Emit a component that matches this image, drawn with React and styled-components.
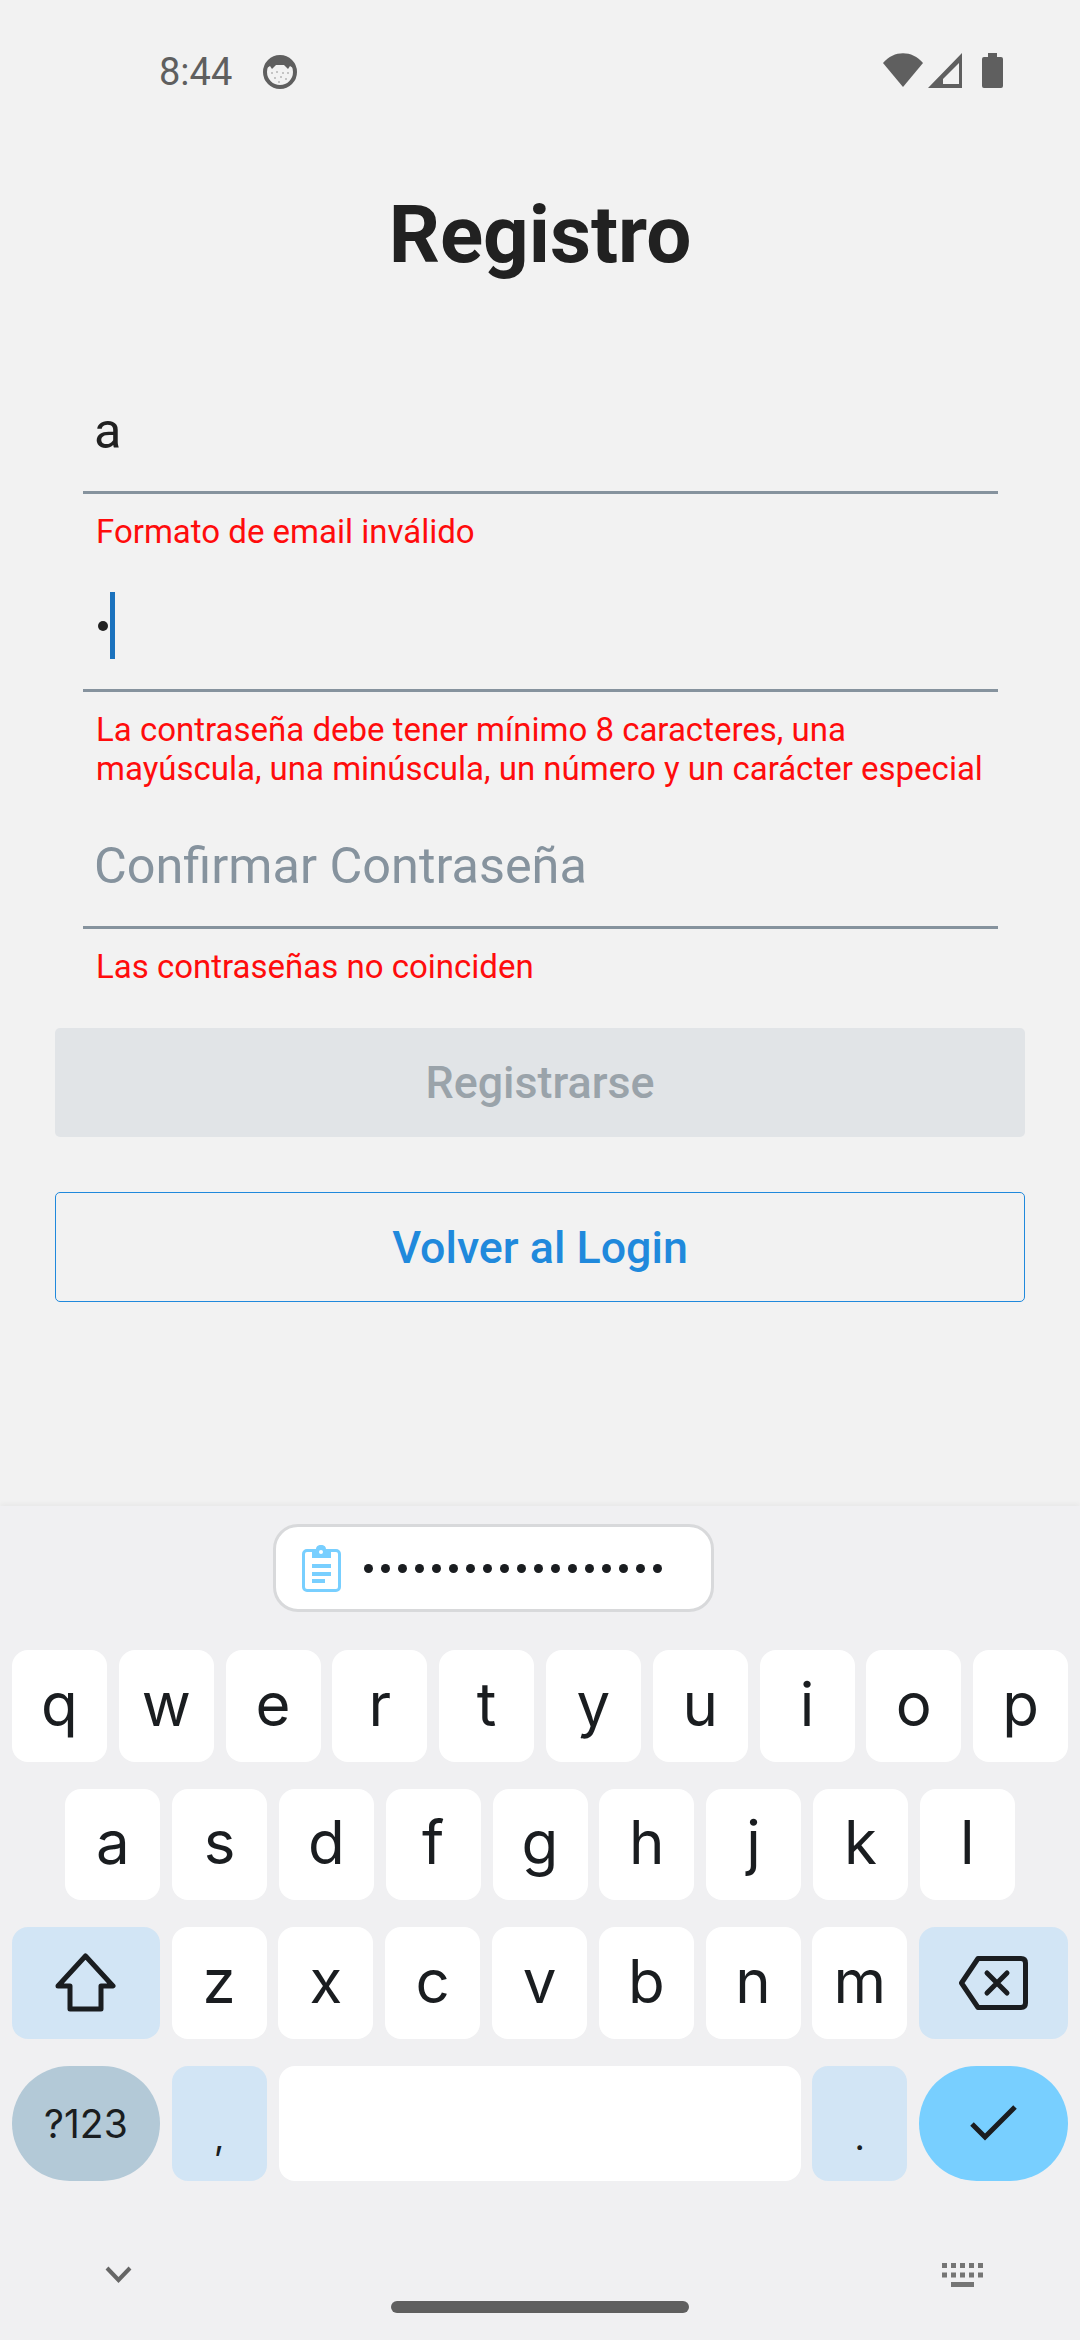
import React from 'react';
import styled, { createGlobalStyle } from 'styled-components';

const GlobalStyle = createGlobalStyle`
  html, body {
    margin: 0;
    padding: 0;
    background: #f2f2f2;
  }
  * {
    box-sizing: border-box;
  }
`;

const Screen = styled.div`
  width: 1080px;
  height: 2340px;
  display: flex;
  flex-direction: column;
  overflow: hidden;
  background: #f2f2f2;
  font-family: Roboto, "Liberation Sans", sans-serif;
`;

const StatusBar = styled.div`
  height: 142px;
  flex: none;
  display: flex;
  justify-content: space-between;
  align-items: flex-start;
  padding: 52px 77px 0 159px;
  color: #5f5f5f;
`;

const StatusLeft = styled.div`
  display: flex;
  align-items: center;
  gap: 31px;
  font-size: 38px;
  line-height: 40px;
`;

const StatusRight = styled.div`
  display: flex;
  align-items: flex-start;
  gap: 5px;
  height: 40px;
  padding-top: 1px;
`;

const BatterySvg = styled.svg`
  margin-left: 15px;
`;

const Title = styled.h1`
  margin: 47px 0 88px;
  font-size: 80px;
  line-height: 92px;
  font-weight: 700;
  text-align: center;
  color: #212121;
`;

const Form = styled.div`
  padding: 0 55px;
  display: flex;
  flex-direction: column;
`;

const Field = styled.div`
  margin: 0 27px 0 28px;
  height: 125px;
  flex: none;
  display: flex;
  align-items: center;
  padding-left: 11px;
  font-size: 50.4px;
  color: ${(p) => (p.$placeholder ? '#86939e' : '#212121')};
  border-bottom: 3px solid #86939e;
`;

const ErrorText = styled.div`
  margin: 18px 27px ${(p) => p.$bottom}px 41px;
  font-size: 33px;
  line-height: 39px;
  color: #ff0c0c;
`;

const Caret = styled.span`
  width: 5px;
  height: 67px;
  background: #1b72bd;
  margin: 0 0 5px 2px;
`;

const Dot = styled.span`
  width: 10px;
  height: 10px;
  border-radius: 50%;
  background: #212121;
  margin: 0 0 4px 4px;
`;

const SolidButton = styled.div`
  height: 109px;
  border-radius: 5px;
  background: #e1e4e7;
  color: #9aa3aa;
  font-size: 44.8px;
  font-weight: 500;
  display: flex;
  align-items: center;
  justify-content: center;
`;

const OutlineButton = styled(SolidButton)`
  margin-top: 55px;
  height: 110px;
  background: transparent;
  border: 1px solid #2089dc;
  color: #2089dc;
`;

const Keyboard = styled.div`
  margin-top: auto;
  height: 834px;
  flex: none;
  background: #f0f0f2;
  box-shadow: 0 -3px 5px rgba(0, 0, 0, 0.04);
  display: flex;
  flex-direction: column;
  font-family: Inter, Roboto, sans-serif;
`;

const SuggestionRow = styled.div`
  height: 144px;
  flex: none;
  display: flex;
  padding: 18px 0 0 273px;
`;

const ClipChip = styled.div`
  width: 441px;
  height: 88px;
  border-radius: 25px;
  background: #fff;
  border: 3px solid #d8d9db;
  display: flex;
  align-items: center;
  gap: 23px;
  padding-left: 26px;
`;

const ClipDots = styled.div`
  display: flex;
  gap: 8px;
`;

const ClipDot = styled.span`
  width: 9px;
  height: 9px;
  border-radius: 50%;
  background: #1a1d20;
`;

const KeyRows = styled.div`
  display: flex;
  flex-direction: column;
  gap: 27px;
  padding: 0 12px;
`;

const KeyRow = styled.div`
  display: flex;
  justify-content: center;
  gap: 11.8px;
  height: ${(p) => p.$height || 111.5}px;
`;

const Key = styled.div`
  width: ${(p) => p.$width || 95}px;
  flex: none;
  display: flex;
  align-items: ${(p) => (p.$low ? 'flex-end' : 'center')};
  justify-content: center;
  border-radius: ${(p) => p.$radius || 16}px;
  background: ${(p) => p.$bg || '#fff'};
  color: #1a1d20;
  font-size: ${(p) => p.$size || 60}px;
  line-height: 1;
  padding-bottom: ${(p) => (p.$low ? 26 : p.$flat ? 0 : 4)}px;
`;

const NavBar = styled.div`
  flex: 1;
  position: relative;
  display: flex;
  justify-content: space-between;
  align-items: flex-start;
  padding: 82px 97px 0 105px;
`;

const ChevronSvg = styled.svg`
  margin-top: 3px;
`;

const HomePill = styled.div`
  position: absolute;
  left: 391px;
  bottom: 27px;
  width: 298px;
  height: 12px;
  border-radius: 6px;
  background: #5f5f5f;
`;

const FaceIcon = () => (
  <svg width="34" height="34" viewBox="0 0 34 34">
    <circle cx="17" cy="17" r="15" fill="#f2f2f2" stroke="#5f5f5f" strokeWidth="4" />
    <path d="M4 13 C6 6 11 3 17 3 C23 3 28 6 30 13 L27 11 L25 14 L21 10 H13 L9 14 L7 11 Z" fill="#5f5f5f" />
    <g fill="#8a8a8a">
      <circle cx="9" cy="18" r="0.8" />
      <circle cx="14" cy="17" r="0.8" />
      <circle cx="20" cy="18" r="0.8" />
      <circle cx="25" cy="18" r="0.8" />
      <circle cx="12" cy="23" r="0.8" />
      <circle cx="18" cy="22" r="0.8" />
      <circle cx="23" cy="24" r="0.8" />
      <circle cx="16" cy="27" r="0.8" />
    </g>
  </svg>
);

const WifiIcon = () => (
  <svg width="40" height="35" viewBox="0 0 40 35">
    <path d="M0 10 C11 -3 29 -3 40 10 L20 34 Z" fill="#5f5f5f" />
  </svg>
);

const SignalIcon = () => (
  <svg width="34" height="35" viewBox="0 0 34 35">
    <path d="M0 35 L34 0 V35 Z M15 31 H31 V10 L15 26 Z" fill="#5f5f5f" fillRule="evenodd" />
  </svg>
);

const BatteryIcon = () => (
  <BatterySvg width="21" height="35" viewBox="0 0 21 35">
    <path d="M6 0 H15 V4 H19 Q21 4 21 6 V33 Q21 35 19 35 H2 Q0 35 0 33 V6 Q0 4 2 4 H6 Z" fill="#5f5f5f" />
  </BatterySvg>
);

const ClipboardIcon = () => (
  <svg width="39" height="47" viewBox="0 0 39 47" fill="none">
    <rect x="1.5" y="5.5" width="36" height="40" rx="3.5" stroke="#78cfff" strokeWidth="3" />
    <path d="M10 4 H14 C14 -1.5 24 -1.5 24 4 H29 V13 H10 Z" fill="#78cfff" />
    <circle cx="19" cy="7" r="2" fill="#fff" />
    <path d="M10 21 H29 M10 29 H29 M10 36 H23" stroke="#78cfff" strokeWidth="4" />
  </svg>
);

const ShiftIcon = () => (
  <svg width="61" height="59" viewBox="0 0 61 59" fill="none">
    <path d="M30.5 3 L58 33 H46 V56 H15 V33 H3 Z" stroke="#1a1d20" strokeWidth="5" strokeLinejoin="round" />
  </svg>
);

const BackspaceIcon = () => (
  <svg width="69" height="54" viewBox="0 0 69 54" fill="none">
    <path d="M19 2.5 H62 Q66.5 2.5 66.5 7 V47 Q66.5 51.5 62 51.5 H19 L2.5 27 Z" stroke="#1a1d20" strokeWidth="5" strokeLinejoin="round" />
    <path d="M28 17 L48 37 M48 17 L28 37" stroke="#1a1d20" strokeWidth="5" strokeLinecap="round" />
  </svg>
);

const CheckIcon = () => (
  <svg width="47" height="36" viewBox="0 0 47 36" fill="none">
    <path d="M2 19 L15 32 L45 2" stroke="#1a1d20" strokeWidth="5" />
  </svg>
);

const ChevronIcon = () => (
  <ChevronSvg width="27" height="17" viewBox="0 0 27 17" fill="none">
    <path d="M2 2 L13.5 14 L25 2" stroke="#666" strokeWidth="4" />
  </ChevronSvg>
);

const KeyboardGlyph = () => (
  <svg width="41" height="24" viewBox="0 0 41 24" fill="#757575">
    {[0, 9, 18, 27, 36].map((x) => (
      <React.Fragment key={x}>
        <rect x={x} y="0" width="5" height="5" />
        <rect x={x} y="9.5" width="5" height="5" />
      </React.Fragment>
    ))}
    <rect x="9" y="19" width="23" height="5" />
  </svg>
);

const rowOne = ['q', 'w', 'e', 'r', 't', 'y', 'u', 'i', 'o', 'p'];
const rowTwo = ['a', 's', 'd', 'f', 'g', 'h', 'j', 'k', 'l'];
const rowThree = ['z', 'x', 'c', 'v', 'b', 'n', 'm'];
const SOFT_BLUE = '#d2e5f5';

export default function App() {
  return (
    <Screen>
      <GlobalStyle />
      <StatusBar>
        <StatusLeft>
          <span>8:44</span>
          <FaceIcon />
        </StatusLeft>
        <StatusRight>
          <WifiIcon />
          <SignalIcon />
          <BatteryIcon />
        </StatusRight>
      </StatusBar>
      <Title>Registro</Title>
      <Form>
        <Field>a</Field>
        <ErrorText $bottom={16}>Formato de email inválido</ErrorText>
        <Field>
          <Dot />
          <Caret />
        </Field>
        <ErrorText $bottom={16}>
          La contraseña debe tener mínimo 8 caracteres, una mayúscula, una minúscula, un número y un carácter especial
        </ErrorText>
        <Field $placeholder>Confirmar Contraseña</Field>
        <ErrorText $bottom={42}>Las contraseñas no coinciden</ErrorText>
        <SolidButton>Registrarse</SolidButton>
        <OutlineButton>Volver al Login</OutlineButton>
      </Form>
      <Keyboard>
        <SuggestionRow>
          <ClipChip>
            <ClipboardIcon />
            <ClipDots>
              {Array.from({ length: 18 }, (_, i) => <ClipDot key={i} />)}
            </ClipDots>
          </ClipChip>
        </SuggestionRow>
        <KeyRows>
          <KeyRow>
            {rowOne.map((k) => <Key key={k}>{k}</Key>)}
          </KeyRow>
          <KeyRow>
            {rowTwo.map((k) => <Key key={k}>{k}</Key>)}
          </KeyRow>
          <KeyRow>
            <Key $width={148} $bg={SOFT_BLUE} $flat><ShiftIcon /></Key>
            {rowThree.map((k) => <Key key={k}>{k}</Key>)}
            <Key $width={149} $bg={SOFT_BLUE} $flat><BackspaceIcon /></Key>
          </KeyRow>
          <KeyRow $height={115}>
            <Key $width={148} $bg="#b3c9d7" $radius={58} $size={39} $flat>?123</Key>
            <Key $bg={SOFT_BLUE} $low $size={36}>,</Key>
            <Key $width={522} />
            <Key $bg={SOFT_BLUE} $low $size={36}>.</Key>
            <Key $width={149} $bg="#78cfff" $radius={58} $flat><CheckIcon /></Key>
          </KeyRow>
        </KeyRows>
        <NavBar>
          <ChevronIcon />
          <KeyboardGlyph />
          <HomePill />
        </NavBar>
      </Keyboard>
    </Screen>
  );
}
